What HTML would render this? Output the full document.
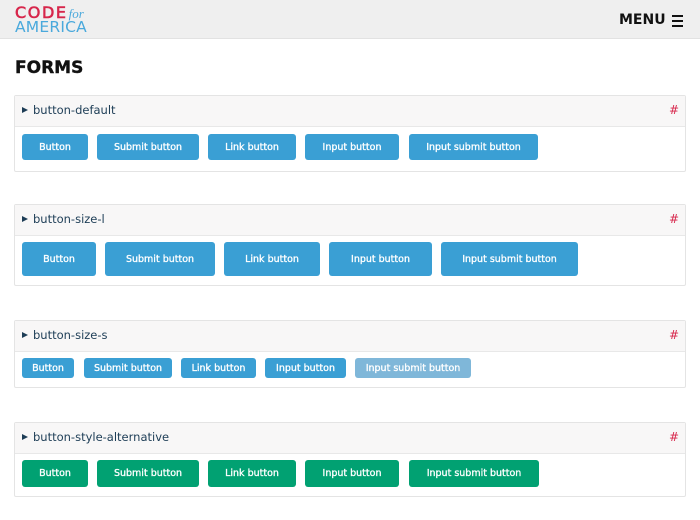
<!DOCTYPE html>
<html><head><meta charset="utf-8"><style>
*{margin:0;padding:0;box-sizing:border-box}
body{width:700px;height:520px;background:#fff;position:relative;overflow:hidden;font-family:"DejaVu Sans",Verdana,sans-serif}
.hdr{position:absolute;left:0;top:0;width:700px;height:39px;background:#efefef;border-bottom:1px solid #e2e2e2}
.logo1{position:absolute;left:15px;top:3px;font:16px "DejaVu Sans",sans-serif;letter-spacing:1.6px;color:#d7264b;-webkit-text-stroke:0.6px #d7264b}
.logo1 i{font:italic 13px "Liberation Serif",serif;color:#4aa9dc;letter-spacing:0;margin-left:1px;-webkit-text-stroke:0}
.logo2{position:absolute;left:15px;top:18px;font:15.5px "DejaVu Sans",sans-serif;letter-spacing:0.2px;color:#4aa9dc}
.menu{position:absolute;left:619px;top:12px;font:bold 14px "DejaVu Sans",sans-serif;color:#111}
.burger{position:absolute;left:672px;top:15px;width:11px}
.burger div{height:2px;background:#111;margin-bottom:3px}
h1{position:absolute;left:15px;top:58px;font:bold 17px "DejaVu Sans",sans-serif;color:#111;-webkit-text-stroke:0.4px #111}
.panel{position:absolute;left:14px;width:672px;border:1px solid #e4e4e4;border-radius:2px;background:#fff}
.ph{height:31px;background:#f8f7f7;border-bottom:1px solid #e8e8e8;position:relative}
.ph span{position:absolute;left:18px;top:7px;font-size:11.5px;color:#1d3d56}
.ph .tri{position:absolute;left:7px;top:11px;width:0;height:0;border-left:6px solid #1d3d56;border-top:3.5px solid transparent;border-bottom:3.5px solid transparent}
.ph .hash{position:absolute;left:auto;right:6px;top:7px;color:#d7264b;font-size:12px}
.b{position:absolute;background:#3a9fd4;color:#fff;font-size:9.5px;display:flex;align-items:center;justify-content:center;border-radius:3px;white-space:nowrap;-webkit-text-stroke:0.3px #fff}
.g{background:#01a172}
.f{background:#7fb7d9}
</style></head><body>
<div class="hdr">
<div class="logo1">CODE<i>for</i></div>
<div class="logo2">AMERICA</div>
<div class="menu">MENU</div>
<div class="burger"><div></div><div></div><div></div></div>
</div>
<h1>FORMS</h1>

<div class="panel" style="top:95px;height:77px"><div class="ph"><div class="tri"></div><span>button-default</span><span class="hash">#</span></div></div>
<div class="b" style="left:22px;top:134px;width:66px;height:26px">Button</div>
<div class="b" style="left:97px;top:134px;width:102px;height:26px">Submit button</div>
<div class="b" style="left:208px;top:134px;width:88px;height:26px">Link button</div>
<div class="b" style="left:305px;top:134px;width:94px;height:26px">Input button</div>
<div class="b" style="left:409px;top:134px;width:129px;height:26px">Input submit button</div>

<div class="panel" style="top:204px;height:82px"><div class="ph"><div class="tri"></div><span>button-size-l</span><span class="hash">#</span></div></div>
<div class="b" style="left:22px;top:242px;width:74px;height:34px">Button</div>
<div class="b" style="left:105px;top:242px;width:110px;height:34px">Submit button</div>
<div class="b" style="left:224px;top:242px;width:96px;height:34px">Link button</div>
<div class="b" style="left:329px;top:242px;width:103px;height:34px">Input button</div>
<div class="b" style="left:441px;top:242px;width:137px;height:34px">Input submit button</div>

<div class="panel" style="top:320px;height:68px"><div class="ph"><div class="tri"></div><span>button-size-s</span><span class="hash">#</span></div></div>
<div class="b" style="left:22px;top:358px;width:52px;height:20px">Button</div>
<div class="b" style="left:84px;top:358px;width:88px;height:20px">Submit button</div>
<div class="b" style="left:181px;top:358px;width:75px;height:20px">Link button</div>
<div class="b" style="left:265px;top:358px;width:81px;height:20px">Input button</div>
<div class="b f" style="left:355px;top:358px;width:116px;height:20px">Input submit button</div>

<div class="panel" style="top:422px;height:75px"><div class="ph"><div class="tri"></div><span>button-style-alternative</span><span class="hash">#</span></div></div>
<div class="b g" style="left:22px;top:460px;width:66px;height:27px">Button</div>
<div class="b g" style="left:97px;top:460px;width:102px;height:27px">Submit button</div>
<div class="b g" style="left:208px;top:460px;width:88px;height:27px">Link button</div>
<div class="b g" style="left:305px;top:460px;width:94px;height:27px">Input button</div>
<div class="b g" style="left:409px;top:460px;width:130px;height:27px">Input submit button</div>
</body></html>
